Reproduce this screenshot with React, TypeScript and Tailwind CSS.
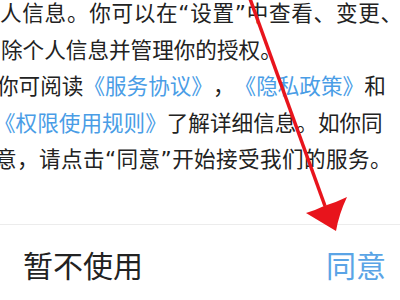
import React from "react";

const font = {
  fontFamily: '"DejaVu Sans", "Noto Sans CJK SC", sans-serif',
};

export default function App() {
  return (
    <div className="relative w-[400px] h-[300px] overflow-hidden bg-white">
      <div className="flex flex-col">
        <div
          className="mt-[-4px] text-[21.6px] leading-[36.5px] text-[#222] whitespace-nowrap [text-spacing-trim:space-all]"
          style={font}
        >
          <div className="ml-[0px] tracking-[0.7px]">人信息。你可以在“设置”中查看、变更、</div>
          <div className="ml-[1px]">除个人信息并管理你的授权。</div>
          <div className="ml-[-3px]">
            你可阅读<span className="text-[#4a9de6]">《服务协议》</span>，<span className="text-[#4a9de6]">《隐私政策》</span>和
          </div>
          <div className="ml-[-6px]">
            <span className="text-[#4a9de6]">《权限使用规则》</span>了解详细信息。如你同
          </div>
          <div className="ml-[-5px] tracking-[0.4px]">意，请点击“同意”开始接受我们的服务。</div>
        </div>
        <div className="mt-[45px] h-px bg-[#ececec]" />
        <div
          className="h-[84px] flex items-center justify-between pl-[23px] pr-[14px] text-[30px]"
          style={font}
        >
          <span className="text-[#222]">暂不使用</span>
          <span className="text-[#5aa4e6]">同意</span>
        </div>
      </div>
      <svg
        className="absolute inset-0 pointer-events-none"
        width="400"
        height="300"
        viewBox="0 0 400 300"
      >
        <line x1="249" y1="-4" x2="325" y2="206" stroke="#e8141c" strokeWidth="3.5" />
        <path
          d="M336 231 L306 213 Q316 210 324 206 Q337 202 347 197 Q339 214 336 231 Z"
          fill="#e8141c"
        />
      </svg>
    </div>
  );
}
